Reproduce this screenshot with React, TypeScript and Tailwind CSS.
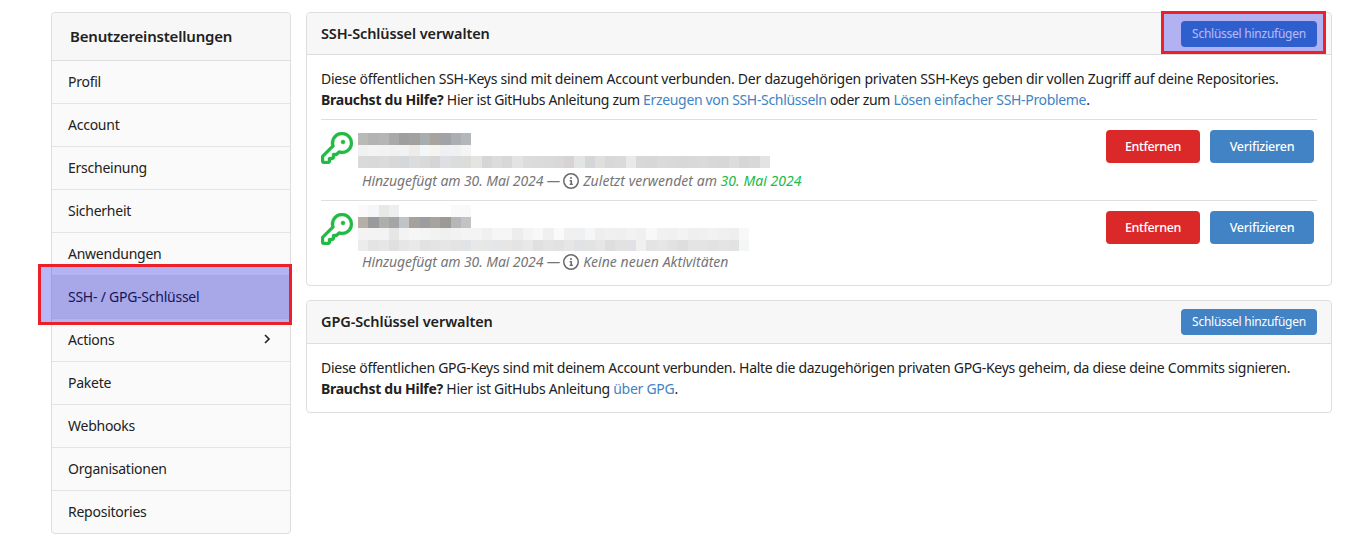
import type { ReactNode } from "react";

const navItems = ["Profil", "Account", "Erscheinung", "Sicherheit", "Anwendungen", "SSH- / GPG-Schlüssel", "Actions", "Pakete", "Webhooks", "Organisationen", "Repositories"];

const keyPath = "M10.5 0a5.499 5.499 0 1 1-1.288 10.848l-.932.932a.749.749 0 0 1-.53.22H7v.75a.749.749 0 0 1-.22.53l-.5.5a.749.749 0 0 1-.53.22H5v.75a.749.749 0 0 1-.22.53l-.5.5a.749.749 0 0 1-.53.22h-2A1.75 1.75 0 0 1 0 14.25v-2c0-.199.079-.389.22-.53l4.932-4.932A5.5 5.5 0 0 1 10.5 0Zm-4 5.5c-.001.431.069.86.205 1.269a.75.75 0 0 1-.181.768L1.5 12.56v1.69c0 .138.112.25.25.25h1.69l.06-.06v-1.19a.75.75 0 0 1 .75-.75h1.19l.06-.06v-1.19a.75.75 0 0 1 .75-.75h1.19l1.023-1.025a.75.75 0 0 1 .768-.18A4 4 0 1 0 6.5 5.5ZM11 6a1 1 0 1 1 0-2 1 1 0 0 1 0 2Z";
const infoPath = "M0 8a8 8 0 1 1 16 0A8 8 0 0 1 0 8Zm8-6.5a6.5 6.5 0 1 0 0 13 6.5 6.5 0 0 0 0-13ZM6.5 7.75A.75.75 0 0 1 7.25 7h1a.75.75 0 0 1 .75.75v2.75h.25a.75.75 0 0 1 0 1.5h-2a.75.75 0 0 1 0-1.5h.25v-2h-.25a.75.75 0 0 1-.75-.75ZM8 6a1 1 0 1 1 0-2 1 1 0 0 1 0 2Z";

// redacted key data: rows of mosaic cells
const mosaicOne = [
  ["#b9b9b7", "#b3b3b3", "#b5b5b5", "#a9a9a9", "#9e9e9e", "#a3a19f", "#a8adb0", "#a9a39e", "#a0a2a8", "#acafb1", "#b4b7b9"],
  ["#f1f1f1", "#f3f3f3", "#f2f2f2", "#f1f1f1", "#f2f2f2", "#eeece9", "#f5f6f8", "#f6f4f1", "#eff0f1", "#f0f0f0", "#f4f4f4"],
  ["#dadada", "#d9d9d9", "#dbdbdb", "#d8d8d8", "#d4d8db", "#dcdcdc", "#d8d9d9", "#d5d5d5", "#dddfe2", "#dbdcdc", "#dcdcdb", "#e4e4e2", "#d5d7d7", "#dcdcdc", "#d7d9d9", "#e3e3e3", "#dcdcdc", "#dbdbd9", "#d9dbdb", "#d8d8d8", "#d6d3d2", "#e3e4e4", "#d4d6da", "#dfdfdb", "#d8d8d8", "#dadada", "#e8e9e8", "#d7d8d8", "#d7d7d7", "#dadada", "#d9d9d9", "#d8d8d8", "#d9d9d9", "#dadada", "#d8d8d8", "#d7d7d7", "#dcdcdc", "#d6d6d6", "#d8d8d8", "#e2e3e5"],
];
const mosaicTwo = [
  ["#fafafa", "#f4f6f8", "#e8e8e6", "#eceef0", "#ffffff", "#ffffff", "#ffffff", "#ffffff", "#ffffff", "#fafafa", "#f9f9f9"],
  ["#b8aea8", "#9a9a9e", "#aeaeaa", "#a4a5a9", "#c0c4c8", "#a6a19d", "#9d9da1", "#a6a4a0", "#9d9995", "#b4b6b9", "#c2c3c4"],
  ["#f3f3f3", "#f3f3f3", "#f3f3f3", "#e6e6e6", "#f3f3f3", "#f5f6f5", "#f4f5f5", "#f2f2f2", "#f0f0f0", "#f2f2f2", "#f4f4f4", "#f4f4f4", "#f0f0f0", "#f6f6f6", "#f6f6f6", "#ededed", "#f4f4f4", "#f8f8f8", "#f0f0f0", "#fafafa", "#f2f0ee", "#eff0f2", "#f6f6f6", "#eeeeee", "#f0f0f0", "#efefef", "#f2f2f2", "#f0f0f0", "#f8f8f8", "#f1f1f1", "#f0f0f0", "#f3f3f3", "#efefef", "#f0f0f0", "#f2f2f2", "#f0f0f0", "#eeeeee", "#f8f8f8"],
  ["#ececec", "#e4e4e4", "#e6e6e6", "#e0e0e0", "#e6e6e6", "#e8eaea", "#e2e2e2", "#e4e4e4", "#e6e6e6", "#e4e4e4", "#e0e4e8", "#e8e8e8", "#e6e8e8", "#e4e6ea", "#e8e6e4", "#e4e4e4", "#e8e8e8", "#e0e0e0", "#e4e4e4", "#e2e2e2", "#e8e6e4", "#e0e2e6", "#e2e4e4", "#e6e6e6", "#dedede", "#e4e2e0", "#e0e2e6", "#f0f0f0", "#e4e4e4", "#e6e6e6", "#e2e2e2", "#dedede", "#e4e4e4", "#e6e4e2", "#e0e2e4", "#e4e4e4", "#e2e2e2", "#f4f6f6"],
];

function Mosaic({ rows }: { rows: string[][] }) {
  return (
    <div className="flex flex-col">
      {rows.map((row, i) => (
        <div key={i} className="flex h-[11.5px]">
          {row.map((c, j) => (
            <div key={j} className="w-[10.3px] h-full" style={{ backgroundColor: c }} />
          ))}
        </div>
      ))}
    </div>
  );
}

function Info() {
  return (
    <svg viewBox="0 0 16 16" className="w-4 h-4 fill-[#6a6a6a] inline-block align-[-3px] ml-[3px] mr-1">
      <path d={infoPath} />
    </svg>
  );
}

function KeyRow({ rows, pad, textGap, children }: { rows: string[][]; pad: string; textGap: string; children: ReactNode }) {
  return (
    <div className="flex border-t border-[#dedede] h-[81px]">
      <div className="flex-1 flex">
        <svg viewBox="0 0 16 16" className="w-8 h-8 fill-[#21ba45] stroke-[#21ba45] stroke-[0.2] mr-[5px] shrink-0 mt-3">
          <path d={keyPath} />
        </svg>
        <div className={`flex flex-col ${pad}`}>
          <Mosaic rows={rows} />
          <div className={`italic text-[#767676] pl-1 leading-5 tracking-[0.03px] ${textGap}`}>{children}</div>
        </div>
      </div>
      <div className="flex items-start gap-[10px] pt-[10px] pr-[3px]">
        <button className="w-[94px] h-[33px] pt-[1px] rounded-[4px] bg-[#db2828] text-white font-medium text-[12.5px] tracking-[-0.35px]">Entfernen</button>
        <button className="w-[104px] h-[33px] pt-[1px] rounded-[4px] bg-[#4183c4] text-white font-medium text-[12.5px]">Verifizieren</button>
      </div>
    </div>
  );
}

function CardHeader({ title, children }: { title: string; children: ReactNode }) {
  return (
    <div className="flex items-center justify-between bg-[#f7f7f7] border-b border-[#dedede] px-[14px] rounded-t-[4px]">
      <h4 className="font-semibold text-[#212121] text-[14.5px] tracking-[-0.1px]">{title}</h4>
      {children}
    </div>
  );
}

export default function App() {
  return (
    <div className="flex items-start gap-[15px] pl-[51px] pr-[13px] pt-3 bg-white text-[14px] tracking-[-0.25px] text-[#212121] font-['Noto_Sans',sans-serif] min-h-[554px]">
      {/* Sidebar */}
      <aside className="relative w-[240px] shrink-0 border border-[#dedede] rounded-[4px] bg-[#fafafa]">
        <div className="h-[48px] flex items-center pl-[18px] bg-[#f7f7f7] font-semibold text-[15px] tracking-[-0.2px] text-[#212121] border-b border-[#dedede] rounded-t-[4px]">
          Benutzereinstellungen
        </div>
        {navItems.map((item, i) => (
          <div
            key={item}
            className={`relative flex items-center justify-between pl-4 pr-[15px] pb-[2px] ${i < navItems.length - 1 ? "h-[43px] border-b border-[#e4e4e4]" : "h-[42px]"} ${i === 5 ? "bg-[#e9e9e9]" : ""}`}
          >
            {item}
            {item === "Actions" && (
              <svg viewBox="0 0 16 16" className="w-4 h-4 fill-none stroke-[#212121] stroke-[1.6]">
                <path d="M6 4l4 4-4 4" />
              </svg>
            )}
            {i === 5 && (
              <div className="absolute left-[-14px] right-[-2px] top-[-12px] h-[61px] border-[3px] border-[#ec2028] bg-[#0000e5]/[.28]" />
            )}
          </div>
        ))}
      </aside>

      {/* Main */}
      <main className="flex-1 flex flex-col gap-[14px]">
        <section className="border border-[#dedede] rounded-[4px] h-[274px]">
          <CardHeader title="SSH-Schlüssel verwalten">
            <div className="relative h-[41px] flex items-center">
              <button className="w-[136px] h-[26px] rounded-[4px] bg-[#4183c4] text-white text-[12px]">Schlüssel hinzufügen</button>
              <div className="absolute left-[-20px] right-[-9px] top-[-2px] h-[43px] border-[3px] border-[#ec2028] bg-[#0000e5]/[.28]" />
            </div>
          </CardHeader>
          <div className="px-[14px] pt-[13px]">
            <p className="leading-[21px]">
              Diese öffentlichen SSH-Keys sind mit deinem Account verbunden. Der dazugehörigen privaten SSH-Keys geben dir vollen Zugriff auf deine Repositories.
              <br />
              <b>Brauchst du Hilfe?</b>{" "}
              <span className="tracking-[-0.33px]">
                Hier ist GitHubs Anleitung zum <a className="text-[#4183c4]">Erzeugen von SSH-Schlüsseln</a> oder zum <a className="text-[#4183c4]">Lösen einfacher SSH-Probleme</a>.
              </span>
            </p>
            <div className="mt-[9px]">
              <KeyRow rows={mosaicOne} pad="pt-[13px]" textGap="mt-[3px]">
                <span className="tracking-[-0.1px]">Hinzugefügt am 30. Mai 2024 —</span>
                <Info />
                Zuletzt verwendet am <span className="text-[#21ba45]">30. Mai 2024</span>
              </KeyRow>
              <KeyRow rows={mosaicTwo} pad="pt-1" textGap="mt-[1px]">
                <span className="tracking-[-0.1px]">Hinzugefügt am 30. Mai 2024 —</span>
                <Info />
                Keine neuen Aktivitäten
              </KeyRow>
            </div>
          </div>
        </section>

        <section className="border border-[#dedede] rounded-[4px] h-[113px]">
          <CardHeader title="GPG-Schlüssel verwalten">
            <div className="h-[42px] flex items-center">
              <button className="w-[136px] h-[26px] rounded-[4px] bg-[#4183c4] text-white text-[12px]">Schlüssel hinzufügen</button>
            </div>
          </CardHeader>
          <div className="px-[14px] pt-[13px]">
            <p className="leading-[21px] tracking-[-0.28px]">
              Diese öffentlichen GPG-Keys sind mit deinem Account verbunden. Halte die dazugehörigen privaten GPG-Keys geheim, da diese deine Commits signieren.
              <br />
              <b>Brauchst du Hilfe?</b> Hier ist GitHubs Anleitung <a className="text-[#4183c4]">über GPG</a>.
            </p>
          </div>
        </section>
      </main>
    </div>
  );
}
